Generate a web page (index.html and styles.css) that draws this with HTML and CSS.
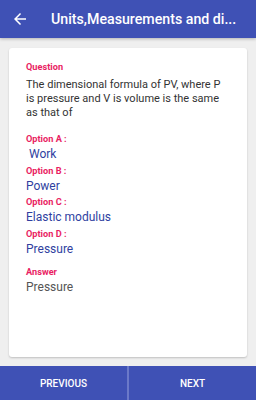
FILE: index.html
```html
<!DOCTYPE html>
<html lang="en">
<head>
  <meta charset="UTF-8">
  <title>Units, Measurements and Dimensions</title>
  <link rel="stylesheet" href="styles.css">
</head>
<body>
  <header class="toolbar">
    <svg class="back" viewBox="0 0 24 24" width="18" height="18">
      <path d="M20 11H7.83l5.59-5.59L12 4l-8 8 8 8 1.41-1.41L7.83 13H20v-2z" fill="#fff"/>
    </svg>
    <div class="title">Units,Measurements and di...</div>
  </header>

  <main class="content">
    <div class="card">
      <div class="label">Question</div>
      <div class="question">The dimensional formula of PV, where P is pressure and V is volume is the same as that of</div>

      <div class="label opt-first">Option A :</div>
      <div class="value">&nbsp;Work</div>
      <div class="label">Option B :</div>
      <div class="value">Power</div>
      <div class="label">Option C :</div>
      <div class="value">Elastic modulus</div>
      <div class="label">Option D :</div>
      <div class="value">Pressure</div>

      <div class="label answer-label">Answer</div>
      <div class="answer">Pressure</div>
    </div>
  </main>

  <footer class="nav">
    <button class="nav-btn">PREVIOUS</button>
    <button class="nav-btn">NEXT</button>
  </footer>
</body>
</html>
```

FILE: styles.css
```css
html, body { margin: 0; padding: 0; }
body {
  width: 256px;
  height: 400px;
  display: flex;
  flex-direction: column;
  font-family: Roboto, "Liberation Sans", sans-serif;
  background: #EFEFEF;
  overflow: hidden;
}
.toolbar {
  height: 38px;
  flex: none;
  display: flex;
  align-items: center;
  background: #3F51B5;
  box-shadow: 0 1px 3px rgba(0,0,0,0.25);
  position: relative;
  z-index: 1;
}
.back { margin-left: 11px; flex: none; }
.title {
  margin-left: 22px;
  color: #fff;
  font-size: 14.2px;
  font-weight: 500;
  white-space: nowrap;
}
.content {
  flex: 1;
  padding: 10px 9px 9px;
  display: flex;
}
.card {
  flex: 1;
  background: #fff;
  border-radius: 3px;
  box-shadow: 0 1px 2px rgba(0,0,0,0.2);
  padding: 13px 17px 0;
}
.label {
  color: #E91E63;
  font-size: 9.2px;
  font-weight: 700;
  line-height: 12px;
  margin-top: 2.7px;
}
.label:first-child { margin-top: 0; }
.question {
  margin-top: 5px;
  color: #333;
  font-size: 11px;
  line-height: 14px;
}
.opt-first { margin-top: 13px; }
.value {
  margin-top: 1px;
  color: #303F9F;
  font-size: 12px;
  line-height: 16px;
}
.answer-label { margin-top: 9px; }
.answer {
  margin-top: 1px;
  color: #555;
  font-size: 12px;
  line-height: 16px;
}
.nav {
  height: 34px;
  flex: none;
  display: flex;
  background: #3F51B5;
}
.nav-btn {
  flex: 1;
  border: 0;
  background: #3F51B5;
  color: #fff;
  font-family: Roboto, "Liberation Sans", sans-serif;
  font-size: 10px;
  font-weight: 500;
  padding: 0;
}
.nav-btn + .nav-btn { border-left: 2px solid #6B79C9; }
```
